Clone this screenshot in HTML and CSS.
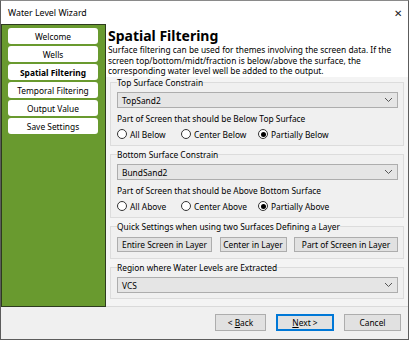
FILE: index.html
```html
<!DOCTYPE html>
<html lang="en">
<head>
    <meta charset="UTF-8">
    <title>Water Level Wizard</title>
    <link rel="stylesheet" href="styles.css">
</head>
<body>
    <div class="window">
        <!-- Title bar -->
        <div class="titlebar">
            <span>Water Level Wizard</span>
            <span class="close">&#x2715;</span>
        </div>

        <div class="main">
            <!-- Wizard steps -->
            <div class="sidebar">
                <div class="step">Welcome</div>
                <div class="step">Wells</div>
                <div class="step active">Spatial Filtering</div>
                <div class="step">Temporal Filtering</div>
                <div class="step">Output Value</div>
                <div class="step">Save Settings</div>
            </div>

            <div class="content">
                <div class="header">
                    <h1>Spatial Filtering</h1>
                    <p>Surface filtering can be used for themes involving the screen data. If the screen top/bottom/midt/fraction is below/above the surface, the corresponding water level well be added to the output.</p>
                </div>

                <div class="groups">
                    <fieldset class="group">
                        <legend>Top Surface Constrain</legend>
                        <div class="combo"><span>TopSand2</span><svg width="9" height="6" viewBox="0 0 9 6"><path d="M1 1 L4.5 4.5 L8 1" fill="none" stroke="#555" stroke-width="1"/></svg></div>
                        <div class="caption">Part of Screen that should be Below Top Surface</div>
                        <div class="radios">
                            <label class="radio"><span class="dot"></span>All Below</label>
                            <label class="radio"><span class="dot"></span>Center Below</label>
                            <label class="radio"><span class="dot on"></span>Partially Below</label>
                        </div>
                    </fieldset>

                    <fieldset class="group">
                        <legend>Bottom Surface Constrain</legend>
                        <div class="combo"><span>BundSand2</span><svg width="9" height="6" viewBox="0 0 9 6"><path d="M1 1 L4.5 4.5 L8 1" fill="none" stroke="#555" stroke-width="1"/></svg></div>
                        <div class="caption">Part of Screen that should be Above Bottom Surface</div>
                        <div class="radios">
                            <label class="radio"><span class="dot"></span>All Above</label>
                            <label class="radio"><span class="dot"></span>Center Above</label>
                            <label class="radio"><span class="dot on"></span>Partially Above</label>
                        </div>
                    </fieldset>

                    <fieldset class="group quick-group">
                        <legend>Quick Settings when using two Surfaces Defining a Layer</legend>
                        <div class="quick">
                            <button class="btn">Entire Screen in Layer</button>
                            <button class="btn">Center in Layer</button>
                            <button class="btn">Part of Screen in Layer</button>
                        </div>
                    </fieldset>

                    <fieldset class="group">
                        <legend>Region where Water Levels are Extracted</legend>
                        <div class="combo"><span>VCS</span><svg width="9" height="6" viewBox="0 0 9 6"><path d="M1 1 L4.5 4.5 L8 1" fill="none" stroke="#555" stroke-width="1"/></svg></div>
                    </fieldset>
                </div>
            </div>
        </div>

        <!-- Navigation buttons -->
        <div class="footer">
            <button class="btn nav back">&lt; <u>B</u>ack</button>
            <button class="btn nav next"><u>N</u>ext &gt;</button>
            <button class="btn nav cancel">Cancel</button>
        </div>
    </div>
</body>
</html>
```

FILE: styles.css
```css
/* Global */
* {
    box-sizing: border-box;
}

body {
    margin: 0;
    font-family: 'Noto Sans', sans-serif;
    font-size: 8.4px;
    color: #000;
    background: #fff;
}

.window {
    width: 409px;
    height: 340px;
    border: 1px solid #5c5c5c;
    border-top-color: #8a8a8a;
    display: flex;
    flex-direction: column;
    background: #f0f0f0;
}

/* Title bar */
.titlebar {
    height: 23px;
    flex: none;
    background: #fff;
    display: flex;
    align-items: center;
    justify-content: space-between;
    padding: 0 6px 0 7px;
    font-size: 8.8px;
}

.close {
    font-size: 10px;
    color: #222;
}

.main {
    height: 283px;
    flex: none;
    display: flex;
}

/* Sidebar with steps */
.sidebar {
    width: 105px;
    flex: none;
    background: #699a2f;
    border: 1px solid #2d3b1e;
    padding: 3px 6px 0 6px;
    display: flex;
    flex-direction: column;
    gap: 2px;
}

.step {
    height: 16px;
    background: #fff;
    border-radius: 3px;
    display: flex;
    align-items: center;
    justify-content: center;
    width: 90px;
}

.step.active {
    font-weight: bold;
}

/* Right part */
.content {
    flex: 1;
    display: flex;
    flex-direction: column;
    background: #f4f4f4;
    border-bottom: 1px solid #dadada;
}

.header {
    background: #fff;
    padding: 3px 4px 0 2px;
    height: 53px;
}

.header h1 {
    margin: 0;
    font-size: 14px;
    line-height: 18px;
}

.header p {
    margin: 0;
    line-height: 10.5px;
}

.groups {
    padding: 0 4px 0 4px;
    display: flex;
    flex-direction: column;
    gap: 3px;
}

.group {
    margin: 0;
    border: 1px solid #dcdcdc;
    background: #f0f0f0;
    padding: 0 5px 5px 6px;
    min-width: 0;
}

.group legend {
    padding: 0;
    line-height: 11px;
}

.combo {
    height: 16px;
    margin-top: 4px;
    border: 1px solid #adadad;
    background: #e5e5e5;
    display: flex;
    align-items: center;
    justify-content: space-between;
    padding: 0 4px 0 4px;
}

.caption {
    margin-top: 5px;
    line-height: 11px;
}

.radios {
    display: flex;
    margin-top: 4px;
    height: 12px;
}

.radio {
    display: flex;
    align-items: center;
    gap: 3px;
    width: 64px;
    white-space: nowrap;
}

.radio:nth-child(2) {
    width: 77px;
}

.radio:nth-child(3) {
    width: auto;
}

.dot {
    width: 10px;
    height: 10px;
    border: 1px solid #333;
    border-radius: 50%;
    background: #fff;
    display: flex;
    align-items: center;
    justify-content: center;
}

.dot.on::after {
    content: "";
    width: 5px;
    height: 5px;
    border-radius: 50%;
    background: #000;
}

/* Buttons */
.btn {
    font: inherit;
    height: 15px;
    padding: 0 2px;
    border: 1px solid #adadad;
    background: #e1e1e1;
    color: #000;
    line-height: 12px;
    white-space: nowrap;
}

.quick-group {
    padding-bottom: 6px;
}

.quick {
    display: flex;
    justify-content: space-between;
    margin-top: 5px;
}

.quick .btn:nth-child(1) {
    width: 95px;
}

.quick .btn:nth-child(2) {
    width: 67px;
}

.quick .btn:nth-child(3) {
    width: 104px;
}

.footer {
    flex: 1;
    display: flex;
    justify-content: flex-end;
    padding: 7px 7px 0 0;
    gap: 10px;
    background: #f0f0f0;
}

.nav {
    height: 17px;
}

.back {
    width: 51px;
}

.next {
    width: 58px;
    border-color: #0078d7;
    box-shadow: inset 0 0 0 1px #0078d7;
}

.cancel {
    width: 57px;
}
```
